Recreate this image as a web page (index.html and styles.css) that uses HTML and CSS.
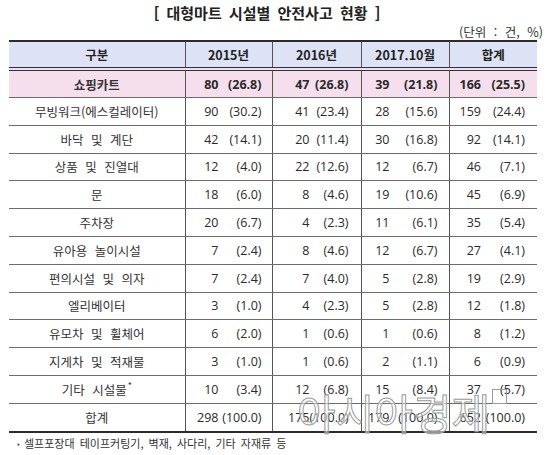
FILE: index.html
```html
<!DOCTYPE html>
<html lang="ko">
<head>
    <meta charset="UTF-8">
    <title>대형마트 시설별 안전사고 현황</title>
    <link rel="stylesheet" href="styles.css">
</head>
<body>
<div class="page">
    <h1 class="title">[ 대형마트 시설별 안전사고 현황 ]</h1>
    <div class="unit">(단위 : 건, %)</div>

    <table class="stats">
        <colgroup>
            <col class="w-label"><col class="w-15"><col class="w-16"><col class="w-17"><col class="w-sum">
        </colgroup>
        <thead>
            <tr>
                <th>구분</th>
                <th>2015년</th>
                <th>2016년</th>
                <th>2017.10월</th>
                <th>합계</th>
            </tr>
        </thead>
        <tbody id="rows"></tbody>
    </table>

    <p class="note"><span class="mark">‣</span>셀프포장대 테이프커팅기, 벽재, 사다리, 기타 자재류 등</p>

    <!-- watermark over the bottom of the table -->
    <div class="watermark">아시아경제<span class="logo"></span></div>
</div>

<script>
    // label, then [count, percent] for 2015, 2016, 2017.10, total
    const rows = [
        ["쇼핑카트", [80, "26.8"], [47, "26.8"], [39, "21.8"], [166, "25.5"], "hl"],
        ["무빙워크(에스컬레이터)", [90, "30.2"], [41, "23.4"], [28, "15.6"], [159, "24.4"]],
        ["바닥 및 계단", [42, "14.1"], [20, "11.4"], [30, "16.8"], [92, "14.1"]],
        ["상품 및 진열대", [12, "4.0"], [22, "12.6"], [12, "6.7"], [46, "7.1"]],
        ["문", [18, "6.0"], [8, "4.6"], [19, "10.6"], [45, "6.9"]],
        ["주차장", [20, "6.7"], [4, "2.3"], [11, "6.1"], [35, "5.4"]],
        ["유아용 놀이시설", [7, "2.4"], [8, "4.6"], [12, "6.7"], [27, "4.1"]],
        ["편의시설 및 의자", [7, "2.4"], [7, "4.0"], [5, "2.8"], [19, "2.9"]],
        ["엘리베이터", [3, "1.0"], [4, "2.3"], [5, "2.8"], [12, "1.8"]],
        ["유모차 및 휠체어", [6, "2.0"], [1, "0.6"], [1, "0.6"], [8, "1.2"]],
        ["지게차 및 적재물", [3, "1.0"], [1, "0.6"], [2, "1.1"], [6, "0.9"]],
        ["기타 시설물<sup>*</sup>", [10, "3.4"], [12, "6.8"], [15, "8.4"], [37, "5.7"]],
        ["합계", [298, "100.0"], [175, "100.0"], [179, "100.0"], [652, "100.0"]]
    ];

    const body = document.getElementById("rows");
    rows.forEach(r => {
        const tr = document.createElement("tr");
        if (r[5]) tr.className = r[5];
        let html = "<td class='label'>" + r[0] + "</td>";
        for (let i = 1; i <= 4; i++) {
            html += "<td class='num'><span class='cnt'>" + r[i][0] + "</span><span class='pct'>(" + r[i][1] + ")</span></td>";
        }
        tr.innerHTML = html;
        body.appendChild(tr);
    });
</script>
</body>
</html>
```

FILE: styles.css
```css
body { margin: 0; background: #fff; color: #2a2a2a; font-family: "Noto Sans CJK KR", sans-serif; }
.page { position: relative; width: 550px; height: 455px; overflow: hidden; }

.title { margin: 0; padding: 3px 16px 0 0; font-size: 15px; line-height: 20px; font-weight: bold; text-align: center; color: #222; word-spacing: 3px; }
.unit { height: 17px; padding-right: 7px; font-size: 12.5px; line-height: 17px; text-align: right; color: #333; word-spacing: 4px; }

.stats { margin-left: 9px; width: 528px; border-collapse: collapse; table-layout: fixed; font-size: 12.5px; }
.w-label { width: 176px; }
.w-15 { width: 87px; }
.w-16 { width: 89px; }
.w-17 { width: 88px; }
.w-sum { width: 88px; }

.stats th, .stats td { padding: 0; border-left: 1px solid #555; border-bottom: 1px solid #6c6c6c; }
.stats th:first-child, .stats td:first-child { border-left: none; }
.stats thead tr { border-top: 2px solid #2b2b2b; }
.stats th { height: 25px; background: #dde3f4; font-weight: bold; border-bottom: 4px double #333; color: #222; }
.stats td { height: 26.8px; }
.stats tbody tr:last-child td { border-bottom: 2px solid #2b2b2b; }

.label { text-align: center; word-spacing: 4px; color: #333; }
.label sup { font-size: 9px; line-height: 0; vertical-align: 6px; margin-left: 1px; }

.num { font-family: "Open Sans", "Noto Sans CJK KR", sans-serif; color: #2a2a2a; }
.num { text-align: right; white-space: nowrap; }
.cnt, .pct { display: inline-block; text-align: right; }

/* count/percent placement per year column */
.num:nth-child(2) { padding-right: 10px; }
.num:nth-child(2) .pct { width: 43px; }
.num:nth-child(3) { padding-right: 12px; }
.num:nth-child(3) .pct { width: 39px; }
.num:nth-child(4) { padding-right: 11px; }
.num:nth-child(4) .pct { width: 48px; }
.num:nth-child(5) { padding-right: 12px; }
.num:nth-child(5) .pct { width: 44px; }

.hl td { background: #f6dfec; font-weight: bold; height: 26px; }

.note { margin: 2px 0 0; padding-left: 17px; font-size: 11px; line-height: 16px; color: #333; word-spacing: 2px; }
.mark { display: inline-block; width: 7px; font-size: 9px; color: #444; }

.watermark { position: absolute; left: 297px; top: 387px; font-size: 42px; line-height: 50px; font-weight: normal; letter-spacing: 0; color: rgba(255, 255, 255, 0.5); -webkit-text-stroke: 1px #999; }
.logo { display: inline-block; width: 13px; height: 13px; margin-left: 2px; vertical-align: 26px; border: 1px solid #999; }
```
